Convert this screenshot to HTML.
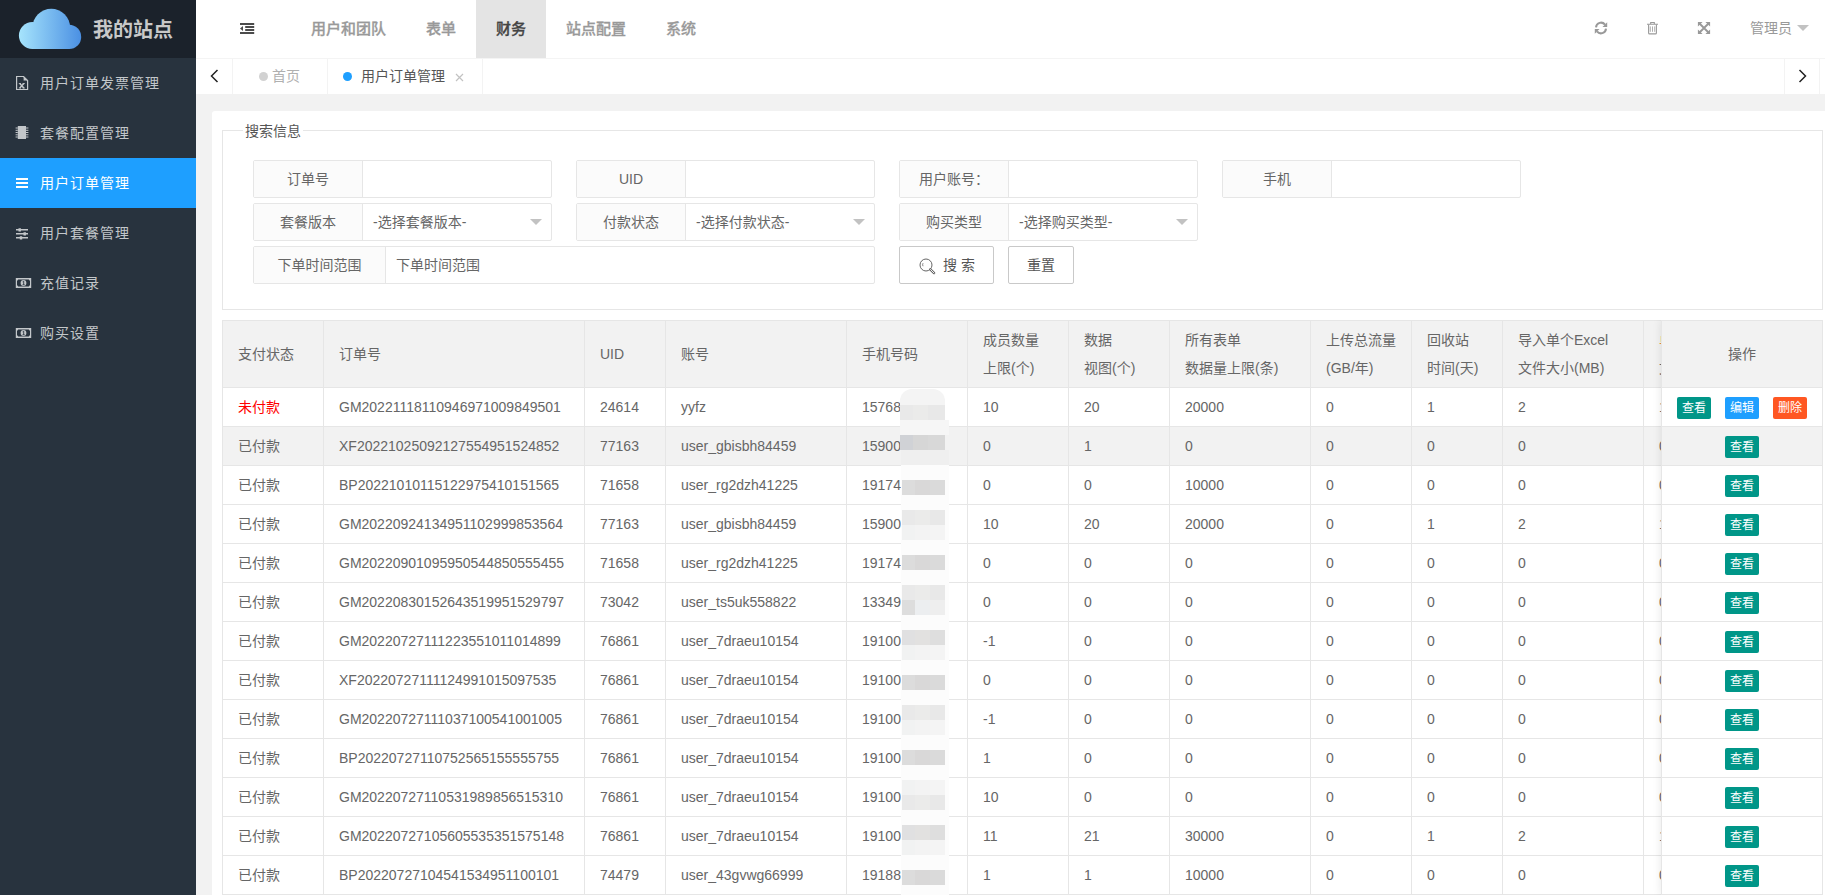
<!DOCTYPE html>
<html lang="zh-CN"><head><meta charset="utf-8"><title>用户订单管理</title>
<style>
*{box-sizing:border-box;margin:0;padding:0}
html,body{width:1825px;height:895px;overflow:hidden}
body{position:relative;background:#f2f2f2;font-family:"Liberation Sans","Noto Sans CJK SC",sans-serif;font-size:14px;color:#666;line-height:24px}
a{text-decoration:none;color:inherit}
.side{position:absolute;left:0;top:0;width:196px;height:895px;background:#28333e}
.logo{position:absolute;left:0;top:0;width:196px;height:58px;background:#1b222b}
.logo svg{position:absolute}
.logo span{position:absolute;left:93px;top:15px;font-size:20px;font-weight:bold;color:#c8c8c8;line-height:30px;letter-spacing:0}
.mi{position:absolute;left:0;width:196px;height:50px;line-height:50px;color:#c3c7ca;font-size:14px;padding-left:40px;letter-spacing:1px}
.mi.on{background:#1e9fff;color:#fff}
.mi svg{position:absolute}
.hdr{position:absolute;left:196px;top:0;right:0;height:58px;background:#fff}
.nav{position:absolute;top:0;height:58px;line-height:57px;font-size:15px;font-weight:500;color:#999;-webkit-text-stroke:0.3px #999;text-align:center}
.nav.on{background:#e4e4e4;color:#444;-webkit-text-stroke:0.3px #444}
.tabs{position:absolute;left:196px;top:58px;right:0;height:36px;background:#fff;border-top:1px solid #f4f4f4}
.vl{position:absolute;top:59px;width:1px;height:35px;background:#f3f3f3}
.card{position:absolute;left:212px;top:111px;width:1630px;height:800px;background:#fff;border-radius:3px}
.fs{position:absolute;left:222px;top:130px;width:1601px;height:180px;border:1px solid #e6e6e6}
.lg{position:absolute;left:243px;top:119px;padding:0 2px;background:#fff;font-size:14px;color:#555;line-height:24px}
.grp{position:absolute;height:38px;border:1px solid #e6e6e6;border-radius:2px;background:#fff}
.grp .l{position:absolute;left:0;top:0;bottom:0;background:#fbfbfb;border-right:1px solid #e6e6e6;text-align:center;line-height:36px;color:#666}
.grp .v{position:absolute;top:0;bottom:0;line-height:36px;color:#666;padding-left:10px}
.grp .tri{position:absolute;right:9px;top:15px;width:0;height:0;border:6px solid transparent;border-top-color:#c2c2c2}
.btn{position:absolute;top:246px;height:38px;border:1px solid #c9c9c9;border-radius:2px;background:#fff;color:#555;line-height:36px;text-align:center}
.tbl{position:absolute;left:222px;top:320px;width:1603px;overflow:hidden}
table{border-collapse:separate;border-spacing:0;table-layout:fixed;border-left:1px solid #e6e6e6;border-top:1px solid #e6e6e6}
th,td{border-right:1px solid #e6e6e6;border-bottom:1px solid #e6e6e6;font-weight:normal;text-align:left;color:#666;font-size:14px}
th{background:#f2f2f2;height:67px;padding:0}
td{height:39px;background:#fff}
tbody tr:nth-child(2) td{background:#f2f2f2}
.c{padding:0 15px;line-height:28px;white-space:nowrap;overflow:hidden}
td.red{color:#f00}
.or{color:#e8913a}
.fix{position:absolute;left:1661px;top:320px;width:162px;border-left:1px solid #e6e6e6;border-right:1px solid #e6e6e6;border-top:1px solid #e6e6e6;background:#fff;box-shadow:-1px 0 8px rgba(0,0,0,.08);clip-path:inset(0 0 0 -12px)}
.fh{height:67px;line-height:66px;background:#f2f2f2;border-bottom:1px solid #e6e6e6;text-align:center;color:#666}
.fr{height:39px;border-bottom:1px solid #e6e6e6;text-align:center;background:#fff;font-size:0;padding-top:9px}
.fr.alt{background:#f2f2f2}
.b{display:inline-block;height:22px;line-height:22px;padding:0 5px;font-size:12px;color:#fff;border-radius:2px;margin:0 7px;vertical-align:top}
.b.g{background:#009688}.b.bl{background:#1e9fff}.b.o{background:#ff5722}
.veil{position:absolute;left:901px;top:465px;width:48px;height:440px;background:#fcfcfc}
.ms{position:absolute;left:902px;width:43px}
.ms.w0{left:900px;width:45px}
.ms.t0{left:900px;width:45px;background:#f4f4f4;border-radius:12px 12px 0 0}
.ms.t1{left:900px;width:49px;background:#f6f6f6}
.ms.t2{left:901px;width:48px;background:#efefef}
.ms.d{background:linear-gradient(90deg,#dcdcdc 0 13px,#d9d8d8 13px 28px,#dadada 28px)}
.ms.d2{background:linear-gradient(90deg,#d0d2d6 0 13px,#d6d6d6 13px 28px,#d8d8d8 28px)}
.ms.m{background:linear-gradient(90deg,#e0e0e1 0 13px,#e2e1e0 13px 28px,#dedede 28px)}
.ms.l{background:linear-gradient(90deg,#e9e9e9 0 13px,#ebebea 13px 28px,#e8e8e8 28px)}
.ms.l5{background:linear-gradient(90deg,#dddddd 0 13px,#eceef0 13px 28px,#eeeeee 28px)}
.ms.ll{background:linear-gradient(90deg,#f1f2f2 0 13px,#f3f3f3 13px 28px,#f4f4f4 28px)}

</style></head>
<body>
<div class="side">
 <div class="logo">
  <svg style="left:0;top:0" width="100" height="58" viewBox="0 0 100 58"><defs><linearGradient id="cg" gradientUnits="userSpaceOnUse" x1="19" y1="0" x2="81" y2="0"><stop offset="0" stop-color="#a6e4fc"/><stop offset="1" stop-color="#4b90e3"/></linearGradient></defs><g fill="url(#cg)"><circle cx="51.300" cy="27.500" r="18.800"/><circle cx="32.400" cy="35.500" r="13.500"/><circle cx="69.100" cy="36.900" r="12.100"/><rect x="32" y="30" width="37.500" height="19"/></g></svg>
  <span>我的站点</span>
 </div>
 <div class="mi" style="top:58px"><svg style="left:15px;top:17px" width="14" height="16" viewBox="0 0 14 16"><path d="M1.600 1.500h7l4 4v9h-11z" fill="none" stroke="#c3c7ca" stroke-width="1.200"/><path d="M8.600 1.500v4h4z" fill="#c3c7ca"/><path d="M4.800 8.600l4 4.400M8.800 8.600l-4 4.400" stroke="#c3c7ca" stroke-width="1.500"/><path d="M3.800 8.500h2.200M7.600 8.500h2.200M3.800 13h2.200M7.600 13h2.200" stroke="#c3c7ca" stroke-width="0.900"/></svg>用户订单发票管理</div>
 <div class="mi" style="top:108px"><svg style="left:15px;top:17px" width="14" height="16" viewBox="0 0 14 16"><rect x="2.800" y="1" width="8.200" height="13" fill="#c3c7ca"/><path d="M0.600 3h2.200M0.600 5.300h2.200M0.600 7.500h2.200M0.600 9.800h2.200M0.600 12h2.200M11 3h2.400M11 5.300h2.400M11 7.500h2.400M11 9.800h2.400M11 12h2.400" stroke="#c3c7ca" stroke-width="1"/></svg>套餐配置管理</div>
 <div class="mi on" style="top:158px"><svg style="left:15px;top:17px" width="14" height="16" viewBox="0 0 14 16"><path d="M1 4h12M1 8h12M1 12h12" stroke="#fff" stroke-width="2"/></svg>用户订单管理</div>
 <div class="mi" style="top:208px"><svg style="left:15px;top:17px" width="14" height="16" viewBox="0 0 14 16"><path d="M1 4.800h12M1 8.800h12M1 12.800h12" stroke="#c3c7ca" stroke-width="1.400"/><path d="M4.700 3.200v3.200M9.700 7.200v3.200M6 11.200v3.200" stroke="#c3c7ca" stroke-width="2.400"/></svg>用户套餐管理</div>
 <div class="mi" style="top:258px"><svg style="left:15px;top:19px" width="17" height="12" viewBox="0 0 17 12"><path d="M0.800 1h15.400v10h-15.400z" fill="#c3c7ca"/><path d="M3.200 2.600h10.600a1.800 1.800 0 0 0 1.200 1.200v4.400a1.800 1.800 0 0 0-1.200 1.200h-10.600a1.800 1.800 0 0 0-1.200-1.200v-4.400a1.800 1.800 0 0 0 1.200-1.200z" fill="#28333e"/><circle cx="8.500" cy="6" r="2.900" fill="#c3c7ca"/><path d="M7.700 4.800l1-0.600v3.400M7.600 7.700h2" fill="none" stroke="#28333e" stroke-width="0.900"/></svg>充值记录</div>
 <div class="mi" style="top:308px"><svg style="left:15px;top:19px" width="17" height="12" viewBox="0 0 17 12"><path d="M0.800 1h15.400v10h-15.400z" fill="#c3c7ca"/><path d="M3.200 2.600h10.600a1.800 1.800 0 0 0 1.200 1.200v4.400a1.800 1.800 0 0 0-1.200 1.200h-10.600a1.800 1.800 0 0 0-1.200-1.200v-4.400a1.800 1.800 0 0 0 1.200-1.200z" fill="#28333e"/><circle cx="8.500" cy="6" r="2.900" fill="#c3c7ca"/><path d="M7.700 4.800l1-0.600v3.400M7.600 7.700h2" fill="none" stroke="#28333e" stroke-width="0.900"/></svg>购买设置</div>
</div>
<div class="hdr">
 <svg style="position:absolute;left:44px;top:23px" width="15" height="12" viewBox="0 0 15 12"><path d="M0 0h14.200v1.900h-14.200zM5.200 3.100h9v1.800h-9zM5.200 6.100h9v1.800h-9zM0 9.100h14.200v1.900h-14.200zM0 5.500l3-2.500v5z" fill="#4c4c4c"/></svg>
 <div class="nav" style="left:95px;width:115px">用户和团队</div>
 <div class="nav" style="left:210px;width:70px">表单</div>
 <div class="nav on" style="left:280px;width:70px">财务</div>
 <div class="nav" style="left:350px;width:100px">站点配置</div>
 <div class="nav" style="left:450px;width:70px">系统</div>
 <svg style="position:absolute;left:1398px;top:21px" width="14" height="14" viewBox="0 0 14 14"><path d="M2 6.300A5 5 0 0 1 11 3.700M12 7.700A5 5 0 0 1 3 10.300" fill="none" stroke="#999" stroke-width="2"/><path d="M13.200 1.200v4.700h-4.700zM0.800 12.800v-4.700h4.700z" fill="#999"/></svg>
 <svg style="position:absolute;left:1450px;top:21px" width="13" height="14" viewBox="0 0 13 14"><path d="M1 3.300h11M4.700 3v-1.500h3.600v1.500" fill="none" stroke="#999" stroke-width="1.100"/><path d="M2.600 3.500v8.400a1 1 0 0 0 1 1h5.800a1 1 0 0 0 1-1v-8.400" fill="none" stroke="#999" stroke-width="1.100"/><path d="M4.300 5.400v5.400M6.500 5.400v5.400M8.700 5.400v5.400" stroke="#999" stroke-width="0.800"/></svg>
 <svg style="position:absolute;left:1501px;top:21px" width="14" height="14" viewBox="0 0 14 14"><path d="M2.500 2.500l9 9M11.500 2.500l-9 9" stroke="#999" stroke-width="1.900"/><path d="M0.900 0.900h4.700l-4.700 4.700zM13.100 0.900h-4.700l4.700 4.700zM0.900 13.100h4.700l-4.700-4.700zM13.100 13.100h-4.700l4.700-4.700z" fill="#999"/></svg>
 <div style="position:absolute;left:1554px;top:16px;line-height:24px;color:#999;font-size:14px">管理员</div>
 <div style="position:absolute;left:1601px;top:25px;width:0;height:0;border:6px solid transparent;border-top-color:#c2c2c2"></div>
</div>
<div class="tabs"></div>
<div class="vl" style="left:232px"></div><div class="vl" style="left:327px"></div><div class="vl" style="left:482px"></div>
<div class="vl" style="left:1784px"></div><div class="vl" style="left:1819px"></div>
<svg style="position:absolute;left:210px;top:69px" width="9" height="14" viewBox="0 0 9 14"><path d="M7.500 1L1.500 7l6 6" fill="none" stroke="#222" stroke-width="1.500"/></svg>
<svg style="position:absolute;left:1798px;top:69px" width="9" height="14" viewBox="0 0 9 14"><path d="M1.500 1l6 6-6 6" fill="none" stroke="#222" stroke-width="1.500"/></svg>
<div style="position:absolute;left:259px;top:72px;width:9px;height:9px;border-radius:50%;background:#d2d2d2"></div>
<div style="position:absolute;left:272px;top:64px;line-height:24px;color:#b0b0b0">首页</div>
<div style="position:absolute;left:343px;top:72px;width:9px;height:9px;border-radius:50%;background:#1e9fff"></div>
<div style="position:absolute;left:361px;top:64px;line-height:24px;color:#555">用户订单管理</div>
<svg style="position:absolute;left:455px;top:73px" width="9" height="9" viewBox="0 0 9 9"><path d="M1 1l7 7M8 1l-7 7" stroke="#c2c2c2" stroke-width="1.200"/></svg>
<div class="card"></div>
<div class="fs"></div><div class="lg">搜索信息</div>
<div class="grp" style="left:253px;top:160px;width:299px"><div class="l" style="width:109px">订单号</div></div>
<div class="grp" style="left:576px;top:160px;width:299px"><div class="l" style="width:109px">UID</div></div>
<div class="grp" style="left:899px;top:160px;width:299px"><div class="l" style="width:109px">用户账号：</div></div>
<div class="grp" style="left:1222px;top:160px;width:299px"><div class="l" style="width:109px">手机</div></div>
<div class="grp" style="left:253px;top:203px;width:299px"><div class="l" style="width:109px">套餐版本</div><div class="v" style="left:109px">-选择套餐版本-</div><div class="tri"></div></div>
<div class="grp" style="left:576px;top:203px;width:299px"><div class="l" style="width:109px">付款状态</div><div class="v" style="left:109px">-选择付款状态-</div><div class="tri"></div></div>
<div class="grp" style="left:899px;top:203px;width:299px"><div class="l" style="width:109px">购买类型</div><div class="v" style="left:109px">-选择购买类型-</div><div class="tri"></div></div>
<div class="grp" style="left:253px;top:246px;width:622px"><div class="l" style="width:132px">下单时间范围</div><div class="v" style="left:132px">下单时间范围</div></div>
<div class="btn" style="left:899px;width:95px"><svg style="position:absolute;left:19px;top:11px" width="18" height="18" viewBox="0 0 18 18"><circle cx="7" cy="7" r="6" fill="none" stroke="#666" stroke-width="1"/><path d="M4 5.200a3.400 3.400 0 0 0 0 3" fill="none" stroke="#666" stroke-width="0.800"/><path d="M11.300 11.300l3.800 3.800" stroke="#666" stroke-width="2.400" stroke-linecap="round"/><path d="M11.500 11.500l3.500 3.500" stroke="#fff" stroke-width="0.900" stroke-linecap="round"/></svg><span style="position:absolute;left:43px;top:0">搜 索</span></div>
<div class="btn" style="left:1008px;width:66px">重置</div>

<div class="tbl"><table style="width:1563px"><thead><tr><th style="width:101px"><div class="c">支付状态</div></th><th style="width:261px"><div class="c">订单号</div></th><th style="width:81px"><div class="c">UID</div></th><th style="width:181px"><div class="c">账号</div></th><th style="width:121px"><div class="c">手机号码</div></th><th style="width:101px"><div class="c">成员数量<br>上限(个)</div></th><th style="width:101px"><div class="c">数据<br>视图(个)</div></th><th style="width:141px"><div class="c">所有表单<br>数据量上限(条)</div></th><th style="width:101px"><div class="c">上传总流量<br>(GB/年)</div></th><th style="width:91px"><div class="c">回收站<br>时间(天)</div></th><th style="width:141px"><div class="c">导入单个Excel<br>文件大小(MB)</div></th><th style="width:141px"><div class="c"><span class="or">单个表单</span><br>文件上限(个)</div></th></tr></thead><tbody>
<tr><td class="red"><div class="c">未付款</div></td><td><div class="c">GM20221118110946971009849501</div></td><td><div class="c">24614</div></td><td><div class="c">yyfz</div></td><td><div class="c">15768</div></td><td><div class="c">10</div></td><td><div class="c">20</div></td><td><div class="c">20000</div></td><td><div class="c">0</div></td><td><div class="c">1</div></td><td><div class="c">2</div></td><td><div class="c">1</div></td></tr>
<tr><td><div class="c">已付款</div></td><td><div class="c">XF20221025092127554951524852</div></td><td><div class="c">77163</div></td><td><div class="c">user_gbisbh84459</div></td><td><div class="c">15900</div></td><td><div class="c">0</div></td><td><div class="c">1</div></td><td><div class="c">0</div></td><td><div class="c">0</div></td><td><div class="c">0</div></td><td><div class="c">0</div></td><td><div class="c">0</div></td></tr>
<tr><td><div class="c">已付款</div></td><td><div class="c">BP20221010115122975410151565</div></td><td><div class="c">71658</div></td><td><div class="c">user_rg2dzh41225</div></td><td><div class="c">19174</div></td><td><div class="c">0</div></td><td><div class="c">0</div></td><td><div class="c">10000</div></td><td><div class="c">0</div></td><td><div class="c">0</div></td><td><div class="c">0</div></td><td><div class="c">0</div></td></tr>
<tr><td><div class="c">已付款</div></td><td><div class="c">GM20220924134951102999853564</div></td><td><div class="c">77163</div></td><td><div class="c">user_gbisbh84459</div></td><td><div class="c">15900</div></td><td><div class="c">10</div></td><td><div class="c">20</div></td><td><div class="c">20000</div></td><td><div class="c">0</div></td><td><div class="c">1</div></td><td><div class="c">2</div></td><td><div class="c">1</div></td></tr>
<tr><td><div class="c">已付款</div></td><td><div class="c">GM20220901095950544850555455</div></td><td><div class="c">71658</div></td><td><div class="c">user_rg2dzh41225</div></td><td><div class="c">19174</div></td><td><div class="c">0</div></td><td><div class="c">0</div></td><td><div class="c">0</div></td><td><div class="c">0</div></td><td><div class="c">0</div></td><td><div class="c">0</div></td><td><div class="c">0</div></td></tr>
<tr><td><div class="c">已付款</div></td><td><div class="c">GM20220830152643519951529797</div></td><td><div class="c">73042</div></td><td><div class="c">user_ts5uk558822</div></td><td><div class="c">13349</div></td><td><div class="c">0</div></td><td><div class="c">0</div></td><td><div class="c">0</div></td><td><div class="c">0</div></td><td><div class="c">0</div></td><td><div class="c">0</div></td><td><div class="c">0</div></td></tr>
<tr><td><div class="c">已付款</div></td><td><div class="c">GM20220727111223551011014899</div></td><td><div class="c">76861</div></td><td><div class="c">user_7draeu10154</div></td><td><div class="c">19100</div></td><td><div class="c">-1</div></td><td><div class="c">0</div></td><td><div class="c">0</div></td><td><div class="c">0</div></td><td><div class="c">0</div></td><td><div class="c">0</div></td><td><div class="c">0</div></td></tr>
<tr><td><div class="c">已付款</div></td><td><div class="c">XF20220727111124991015097535</div></td><td><div class="c">76861</div></td><td><div class="c">user_7draeu10154</div></td><td><div class="c">19100</div></td><td><div class="c">0</div></td><td><div class="c">0</div></td><td><div class="c">0</div></td><td><div class="c">0</div></td><td><div class="c">0</div></td><td><div class="c">0</div></td><td><div class="c">0</div></td></tr>
<tr><td><div class="c">已付款</div></td><td><div class="c">GM20220727111037100541001005</div></td><td><div class="c">76861</div></td><td><div class="c">user_7draeu10154</div></td><td><div class="c">19100</div></td><td><div class="c">-1</div></td><td><div class="c">0</div></td><td><div class="c">0</div></td><td><div class="c">0</div></td><td><div class="c">0</div></td><td><div class="c">0</div></td><td><div class="c">0</div></td></tr>
<tr><td><div class="c">已付款</div></td><td><div class="c">BP20220727110752565155555755</div></td><td><div class="c">76861</div></td><td><div class="c">user_7draeu10154</div></td><td><div class="c">19100</div></td><td><div class="c">1</div></td><td><div class="c">0</div></td><td><div class="c">0</div></td><td><div class="c">0</div></td><td><div class="c">0</div></td><td><div class="c">0</div></td><td><div class="c">0</div></td></tr>
<tr><td><div class="c">已付款</div></td><td><div class="c">GM20220727110531989856515310</div></td><td><div class="c">76861</div></td><td><div class="c">user_7draeu10154</div></td><td><div class="c">19100</div></td><td><div class="c">10</div></td><td><div class="c">0</div></td><td><div class="c">0</div></td><td><div class="c">0</div></td><td><div class="c">0</div></td><td><div class="c">0</div></td><td><div class="c">0</div></td></tr>
<tr><td><div class="c">已付款</div></td><td><div class="c">GM20220727105605535351575148</div></td><td><div class="c">76861</div></td><td><div class="c">user_7draeu10154</div></td><td><div class="c">19100</div></td><td><div class="c">11</div></td><td><div class="c">21</div></td><td><div class="c">30000</div></td><td><div class="c">0</div></td><td><div class="c">1</div></td><td><div class="c">2</div></td><td><div class="c">1</div></td></tr>
<tr><td><div class="c">已付款</div></td><td><div class="c">BP20220727104541534951100101</div></td><td><div class="c">74479</div></td><td><div class="c">user_43gvwg66999</div></td><td><div class="c">19188</div></td><td><div class="c">1</div></td><td><div class="c">1</div></td><td><div class="c">10000</div></td><td><div class="c">0</div></td><td><div class="c">0</div></td><td><div class="c">0</div></td><td><div class="c">0</div></td></tr>
</tbody></table></div>
<div class="fix"><div class="fh">操作</div>
<div class="fr"><a class="b g">查看</a><a class="b bl">编辑</a><a class="b o">删除</a></div>
<div class="fr alt"><a class="b g">查看</a></div>
<div class="fr"><a class="b g">查看</a></div>
<div class="fr"><a class="b g">查看</a></div>
<div class="fr"><a class="b g">查看</a></div>
<div class="fr"><a class="b g">查看</a></div>
<div class="fr"><a class="b g">查看</a></div>
<div class="fr"><a class="b g">查看</a></div>
<div class="fr"><a class="b g">查看</a></div>
<div class="fr"><a class="b g">查看</a></div>
<div class="fr"><a class="b g">查看</a></div>
<div class="fr"><a class="b g">查看</a></div>
<div class="fr"><a class="b g">查看</a></div>
</div>
<div class="veil"></div><div class="ms t0" style="top:389px;height:16px"></div><div class="ms l w0" style="top:405px;height:15px"></div><div class="ms t1" style="top:420px;height:15px"></div><div class="ms d2 w0" style="top:435px;height:15px"></div><div class="ms t2" style="top:450px;height:15px"></div><div class="ms d" style="top:480px;height:15px"></div><div class="ms l" style="top:510px;height:15px"></div><div class="ms ll" style="top:525px;height:15px"></div><div class="ms d" style="top:555px;height:15px"></div><div class="ms l" style="top:585px;height:15px"></div><div class="ms l5" style="top:600px;height:15px"></div><div class="ms m" style="top:630px;height:15px"></div><div class="ms ll" style="top:645px;height:15px"></div><div class="ms d" style="top:675px;height:15px"></div><div class="ms l" style="top:705px;height:15px"></div><div class="ms ll" style="top:720px;height:15px"></div><div class="ms d" style="top:750px;height:15px"></div><div class="ms ll" style="top:780px;height:15px"></div><div class="ms l" style="top:795px;height:15px"></div><div class="ms m" style="top:825px;height:15px"></div><div class="ms ll" style="top:840px;height:15px"></div><div class="ms d" style="top:870px;height:15px"></div>

</body></html>
